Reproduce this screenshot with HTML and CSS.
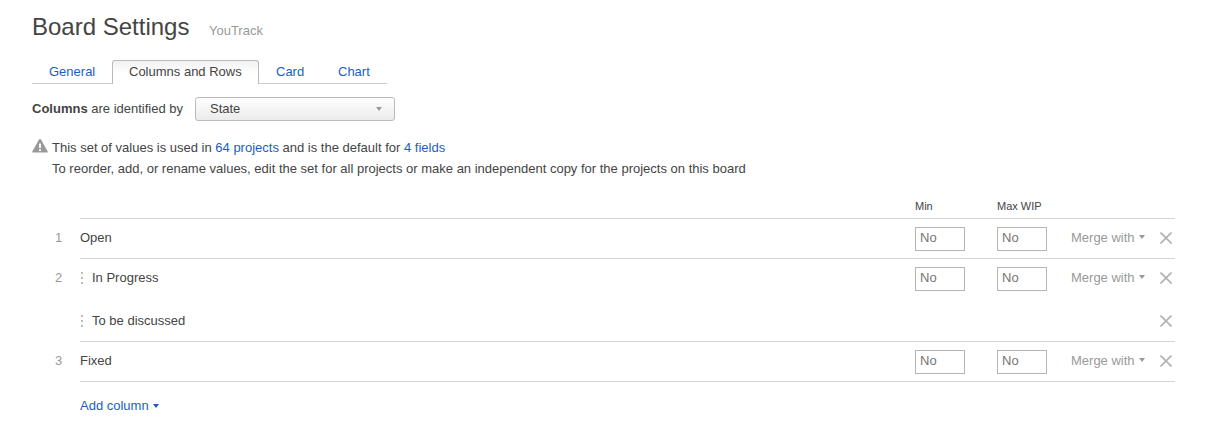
FILE: index.html
```html
<!DOCTYPE html>
<html lang="en">
<head>
<meta charset="utf-8">
<title>Board Settings</title>
<link rel="stylesheet" href="styles.css">
</head>
<body>
<svg class="defs" width="0" height="0" aria-hidden="true">
  <symbol id="cross" viewBox="0 0 12 12"><path d="M.5.5l11 11M11.5.5l-11 11" fill="none" stroke="currentColor" stroke-width="1.6"/></symbol>
  <symbol id="caret" viewBox="0 0 6 4"><path d="M0 0h6L3 4z" fill="currentColor"/></symbol>
</svg>
<main class="page">
  <header class="header">
    <h1 class="title">Board Settings</h1>
    <span class="product">YouTrack</span>
  </header>
  <nav class="tabs">
    <a class="tab tab-general">General</a>
    <a class="tab tab-active">Columns and Rows</a>
    <a class="tab tab-card">Card</a>
    <a class="tab tab-chart">Chart</a>
  </nav>
  <div class="field">
    <span class="field-label"><b>Columns</b> are identified by</span>
    <div class="select"><span>State</span><svg class="caret" width="6" height="4"><use href="#caret"/></svg></div>
  </div>
  <div class="notice">
    <svg class="warning" width="16" height="14" viewBox="0 0 16 14"><path d="M8 0c.5 0 .8.300 1 .6l6.700 11.900c.3.600 0 1.100-.7 1.100H1c-.7 0-1-.5-.7-1.100L7 .6c.2-.3.500-.6 1-.6z" fill="#999"/><path d="M7 4.500h2v4.500H7zM7 10.300h2v1.700H7z" fill="#fff"/></svg>
    <div class="notice-text">
      <p>This set of values is used in <a>64 projects</a> and is the default for <a>4 fields</a></p>
      <p>To reorder, add, or rename values, edit the set for all projects or make an independent copy for the projects on this board</p>
    </div>
  </div>
  <section class="board">
    <div class="head"><span class="head-min">Min</span><span>Max WIP</span></div>
    <div class="group">
      <span class="num">1</span>
      <div class="lines">
        <div class="row"><span class="name">Open</span><span class="limit">No</span><span class="limit">No</span><a class="merge">Merge with<svg class="caret" width="6" height="4"><use href="#caret"/></svg></a><svg class="cross" width="12" height="12"><use href="#cross"/></svg></div>
      </div>
    </div>
    <div class="group">
      <span class="num">2</span>
      <div class="lines">
        <div class="row"><span class="name"><i class="grip"></i>In Progress</span><span class="limit">No</span><span class="limit">No</span><a class="merge">Merge with<svg class="caret" width="6" height="4"><use href="#caret"/></svg></a><svg class="cross" width="12" height="12"><use href="#cross"/></svg></div>
        <div class="row row-merged"><span class="name"><i class="grip"></i>To be discussed</span><svg class="cross" width="12" height="12"><use href="#cross"/></svg></div>
      </div>
    </div>
    <div class="group">
      <span class="num">3</span>
      <div class="lines">
        <div class="row"><span class="name">Fixed</span><span class="limit">No</span><span class="limit">No</span><a class="merge">Merge with<svg class="caret" width="6" height="4"><use href="#caret"/></svg></a><svg class="cross" width="12" height="12"><use href="#cross"/></svg></div>
      </div>
    </div>
    <a class="add">Add column<svg class="caret" width="6" height="4"><use href="#caret"/></svg></a>
  </section>
</main>
</body>
</html>
```
FILE: styles.css
```css
* { box-sizing: border-box; }
body {
  margin: 0;
  background: #fff;
  color: #444;
  font: 13px/20px "Liberation Sans", Arial, sans-serif;
}
a { color: #1a5dc8; }
p { margin: 0; }
.defs { display: none; }
.page { padding: 12px 32px 0; }
.header { display: flex; align-items: baseline; gap: 19.5px; height: 48px; }
.title { margin: 0; font-size: 24px; line-height: 30px; font-weight: 400; }
.product { color: #999; }
.tabs {
  display: flex;
  width: 355px;
  height: 24px;
  line-height: 23px;
}
.tab { border-bottom: 1px solid #ccc; white-space: nowrap; }
.tab-general { width: 80px; padding-left: 17px; }
.tab-active {
  width: 147px;
  padding-left: 16px;
  line-height: 22px;
  color: #444;
  border: 1px solid #bbb;
  border-bottom: 0;
  border-radius: 3px 3px 0 0;
  background: linear-gradient(#f1f1f1, #fff 12px);
}
.tab-card { width: 62px; padding-left: 17px; }
.tab-chart { flex: 1; padding-left: 17px; }
.field { display: flex; align-items: center; height: 24px; margin-top: 13px; }
.field-label { width: 163px; }
.select {
  display: flex;
  align-items: center;
  justify-content: space-between;
  width: 200px;
  height: 24px;
  padding: 0 12px 0 14px;
  border: 1px solid #bbb;
  border-radius: 3px;
  background: linear-gradient(#fff, #ebebeb);
}
.caret { flex: none; color: #999; }
.notice { display: flex; gap: 4px; margin-top: 16px; line-height: 21px; }
.warning { flex: none; margin-top: 2px; }
.board { padding-left: 23px; }
.head {
  display: flex;
  height: 40px;
  margin: 0 0 0 25px;
  padding: 17px 0 0 835px;
  border-bottom: 1px solid #d4d4d4;
  width: 1095px;
  font-size: 11px;
}
.head-min { width: 82px; }
.group { display: flex; }
.num { width: 25px; line-height: 38px; color: #999; }
.lines { width: 1095px; border-bottom: 1px solid #d4d4d4; }
.row { display: flex; align-items: center; height: 39px; }
.row-merged { height: 43px; }
.group .row-merged .cross { margin-top: 4px; }
.name { display: flex; align-items: center; flex: 1; padding-bottom: 1px; }
.row-merged .name { padding: 2px 0 0; }
.grip {
  width: 2px;
  height: 12px;
  margin: 0 9px 0 1px;
  background: repeating-linear-gradient(#bbb 0 2px, transparent 2px 5px);
}
.limit {
  width: 50px;
  height: 24px;
  margin-right: 32px;
  padding-left: 4px;
  border: 1px solid #b5b5b5;
  line-height: 20px;
  color: #757575;
}
.limit + .merge { margin-left: -8px; }
.merge { display: flex; align-items: center; width: 89px; gap: 4px; padding-bottom: 1px; color: #999; }
.merge .caret { margin-bottom: 2px; }
.cross { flex: none; margin: 0 3px 2px 0; color: #b0b0b0; }
.add { display: flex; align-items: center; gap: 4px; margin: 14px 0 0 25px; }
.add .caret { color: #1a5dc8; }
```
